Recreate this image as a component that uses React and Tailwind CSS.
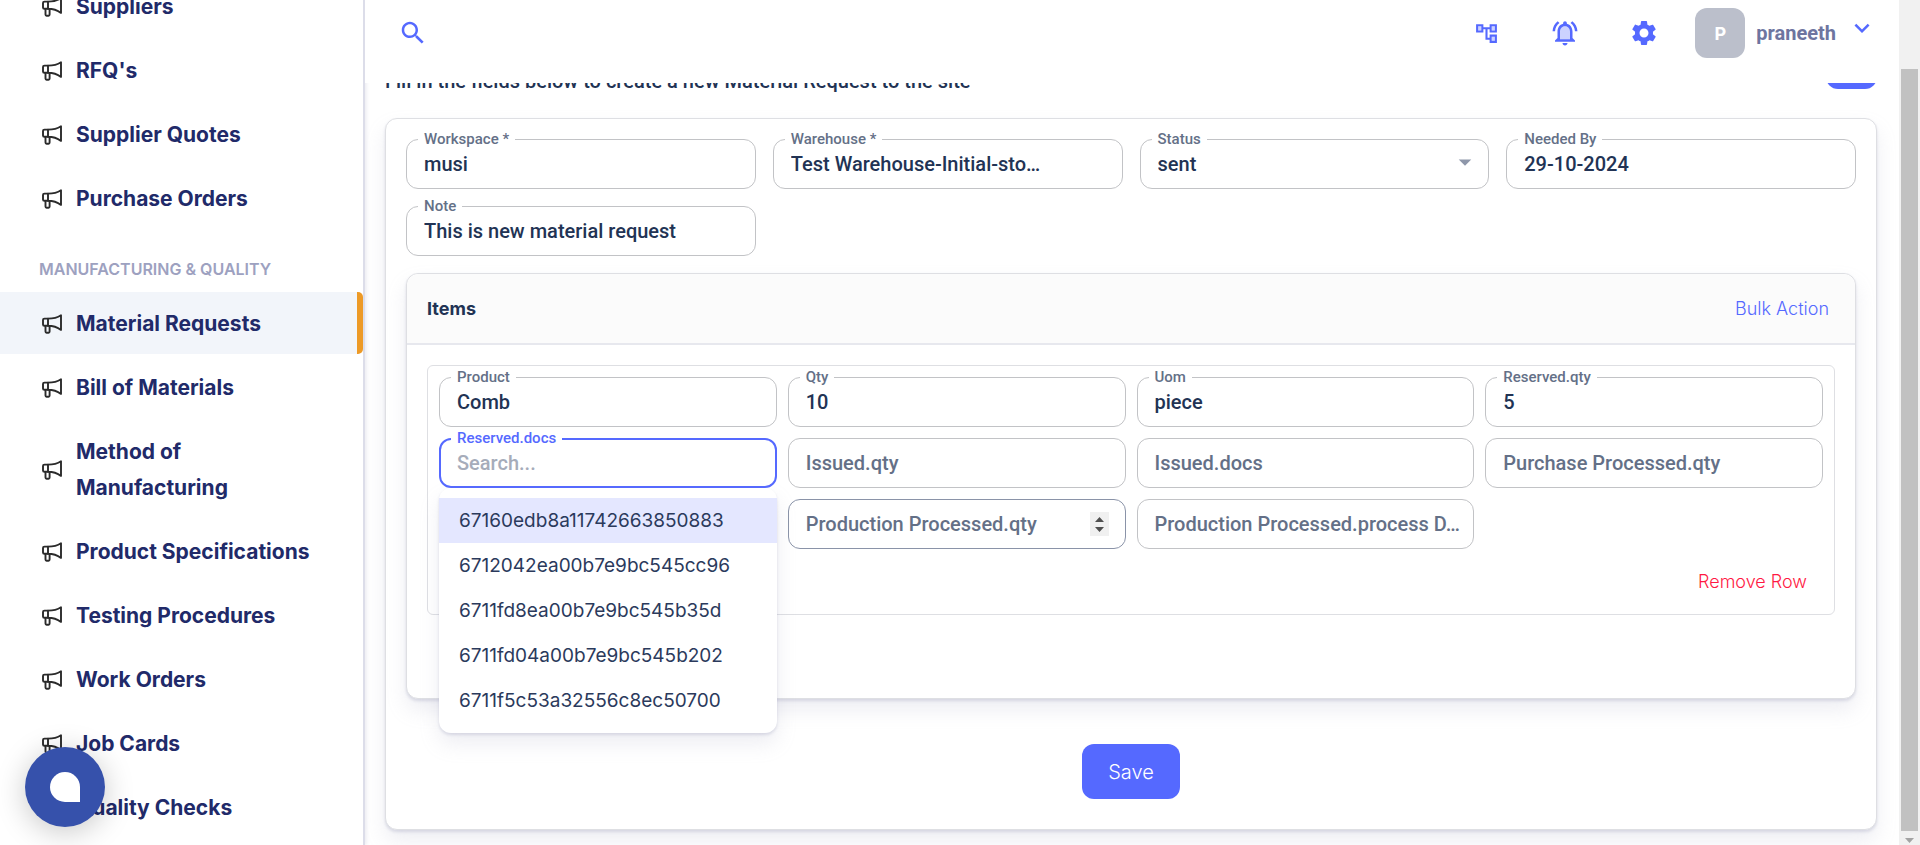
import { useId } from "react";

const purchasing = ["Suppliers", "RFQ's", "Supplier Quotes", "Purchase Orders"];
const manufacturing = [
  "Material Requests",
  "Bill of Materials",
  "Method of Manufacturing",
  "Product Specifications",
  "Testing Procedures",
  "Work Orders",
  "Job Cards",
  "Quality Checks",
];
const documents = [
  "67160edb8a11742663850883",
  "6712042ea00b7e9bc545cc96",
  "6711fd8ea00b7e9bc545b35d",
  "6711fd04a00b7e9bc545b202",
  "6711f5c53a32556c8ec50700",
];

function Megaphone() {
  return (
    <svg width="20" height="20" viewBox="0 0 20 20" fill="none" stroke="#2b2b2b" strokeWidth="1.9" strokeLinejoin="round" strokeLinecap="round" className="shrink-0">
      <path d="M6 4.6H2.4C1.4 4.6 1 5.2 1 6v4.400c0 .9.400 1.400 1.400 1.400H6" />
      <path d="M6 4.6c5.500 0 8.800-.6 13-3.400v14.700C15.300 13.200 11.700 11.800 6 11.800z" />
      <path d="M3.500 12v5.600c0 .9.300 1.200 1 1.200h2.100c.7 0 1-.3 1-1.200V12.100" />
    </svg>
  );
}

function NavItem({ label, active }) {
  return (
    <li>
      <a
        href="#"
        aria-current={active ? "page" : undefined}
        className={`flex items-center gap-[14px] pt-[14px] pr-8 pb-3 pl-[42px] text-[21px] leading-9 font-bold text-[#212a69] ${active ? "rounded-r-[5px] border-r-[6px] border-[#ed9a26] bg-[#f2f5fa]" : ""}`}
      >
        <Megaphone />
        <span>{label}</span>
      </a>
    </li>
  );
}

function Sidebar() {
  return (
    <nav className="relative z-10 w-[365px] shrink-0 overflow-hidden border-r-2 border-[#dcdde9] bg-white shadow-[2px_0_3px_rgba(159,162,191,0.18)]">
      <ul className="-mt-[25px] flex flex-col gap-[2px]">
        {purchasing.map((label) => (
          <NavItem key={label} label={label} />
        ))}
      </ul>
      <h2 className="pt-[29px] pb-[11px] pl-[39px] text-base leading-[23px] font-semibold text-[#9da1c0]">MANUFACTURING &amp; QUALITY</h2>
      <ul className="flex flex-col gap-[2px]">
        {manufacturing.map((label, i) => (
          <NavItem key={label} label={label} active={i === 0} />
        ))}
      </ul>
    </nav>
  );
}

function IconButton({ label, children }) {
  return (
    <button type="button" aria-label={label} className="flex h-[50px] w-[50px] items-center justify-center text-[#5569ff]">
      {children}
    </button>
  );
}

function Header() {
  return (
    <header className="relative z-10 flex h-[83px] shrink-0 items-start justify-between bg-white pt-2 pr-[22px] pl-[23px]">
      <IconButton label="Search">
        <svg width="30" height="30" viewBox="0 0 24 24" fill="currentColor">
          <path d="M15.5 14h-.79l-.28-.27C15.41 12.59 16 11.11 16 9.500 16 5.910 13.090 3 9.500 3S3 5.910 3 9.500 5.910 16 9.500 16c1.610 0 3.090-.59 4.230-1.570l.27.28v.79l5 4.990L20.490 19l-4.990-5zm-6 0C7.010 14 5 11.990 5 9.500S7.010 5 9.500 5 14 7.010 14 9.500 11.990 14 9.500 14z" />
        </svg>
      </IconButton>
      <div className="flex">
        <div className="mr-[26px] flex gap-[29px]">
          <IconButton label="Structure">
            <svg width="25" height="25" viewBox="0 0 24 24" fill="currentColor">
              <path opacity=".3" d="M7 5v4H4V5h3zm13 0v4h-3V5h3zm0 10v4h-3v-4h3z" />
              <path d="M22 11V3h-7v3H9V3H2v8h7V8h2v10h4v3h7v-8h-7v3h-2V8h2v3h7zM7 9H4V5h3v4zm10 6h3v4h-3v-4zm0-10h3v4h-3V5z" />
            </svg>
          </IconButton>
          <IconButton label="Notifications">
            <svg width="30" height="30" viewBox="0 0 24 24" fill="currentColor">
              <path opacity=".3" d="M12 6.500c-2.490 0-4 2.020-4 4.500v6h8v-6c0-2.480-1.510-4.500-4-4.500z" />
              <path d="M12 22c1.100 0 2-.9 2-2h-4c0 1.100.9 2 2 2zm6-6v-5c0-3.070-1.630-5.640-4.500-6.320V4c0-.83-.67-1.500-1.500-1.500s-1.500.67-1.500 1.500v.68C7.640 5.360 6 7.920 6 11v5l-2 2v1h16v-1l-2-2zm-2 1H8v-6c0-2.480 1.510-4.500 4-4.500s4 2.020 4 4.500v6zM7.580 4.080 6.150 2.650C3.750 4.480 2.170 7.300 2.030 10.500h2c.15-2.650 1.510-4.970 3.550-6.420zm12.390 6.420h2c-.15-3.200-1.730-6.020-4.120-7.850l-1.420 1.430c2.020 1.450 3.390 3.770 3.540 6.420z" />
            </svg>
          </IconButton>
          <IconButton label="Settings">
            <svg width="30" height="30" viewBox="0 0 24 24" fill="currentColor">
              <path d="M19.140 12.940c.04-.3.060-.61.060-.94 0-.32-.02-.64-.07-.94l2.030-1.580c.18-.14.23-.41.120-.61l-1.920-3.320c-.12-.22-.37-.29-.59-.22l-2.390.96c-.5-.38-1.030-.7-1.620-.94l-.36-2.540c-.04-.24-.24-.41-.48-.41h-3.840c-.24 0-.43.17-.47.41l-.36 2.540c-.59.24-1.130.57-1.620.94l-2.390-.96c-.22-.08-.47 0-.59.22L2.740 8.870c-.12.21-.08.47.120.61l2.030 1.580c-.05.3-.09.63-.09.94s.02.64.07.94l-2.030 1.580c-.18.14-.23.41-.12.61l1.920 3.320c.12.22.37.29.59.22l2.390-.96c.5.38 1.030.7 1.620.94l.36 2.540c.05.24.24.41.48.41h3.840c.24 0 .44-.17.47-.41l.36-2.540c.59-.24 1.130-.56 1.620-.94l2.390.96c.22.08.47 0 .59-.22l1.920-3.320c.12-.22.07-.47-.12-.61l-2.010-1.580zM12 15.600c-1.980 0-3.600-1.620-3.600-3.600s1.620-3.600 3.600-3.600 3.600 1.620 3.600 3.600-1.620 3.600-3.600 3.600z" />
            </svg>
          </IconButton>
        </div>
        <button type="button" className="flex items-center gap-[11px]">
          <span className="flex h-[50px] w-[50px] items-center justify-center rounded-xl bg-[#bbbfcb] text-[18px] font-bold text-white">P</span>
          <span className="font-['Roboto',sans-serif] text-xl font-bold text-[#6e759f]">praneeth</span>
          <svg width="30" height="30" viewBox="0 0 24 24" fill="#5569ff" className="mb-[10px]">
            <path d="M16.590 8.590 12 13.170 7.410 8.590 6 10l6 6 6-6z" />
          </svg>
        </button>
      </div>
    </header>
  );
}

function Field({ label, value, placeholder, options, focused, hovered, stepper, className = "", children }) {
  const id = useId();
  const raised = value !== undefined || focused;
  const border = focused ? "border-2 border-[#5569ff] px-[16px]" : hovered ? "border border-[#8a93a8] px-[17px]" : "border border-[#c2c3c6] px-[17px]";
  const box = `h-[50px] w-full rounded-xl bg-white text-xl font-medium text-[#223354] outline-none placeholder:text-[#a6acba] ${border}`;
  return (
    <div className={`relative font-['Roboto',sans-serif] ${className}`}>
      {options ? (
        <>
          <select id={id} defaultValue={value} className={`appearance-none ${box}`}>
            {options.map((o) => (
              <option key={o}>{o}</option>
            ))}
          </select>
          <svg width="30" height="30" viewBox="0 0 24 24" fill="#8e97aa" className="pointer-events-none absolute top-2 right-[9px]">
            <path d="m7 10 5 5 5-5z" />
          </svg>
        </>
      ) : (
        <input id={id} type="text" defaultValue={value} placeholder={placeholder} className={box} />
      )}
      {raised ? (
        <label htmlFor={id} className={`absolute -top-[9px] left-3 bg-white px-[6px] text-[15px] leading-[18px] font-medium ${focused ? "text-[#5569ff]" : "text-[#647087]"}`}>
          {label}
        </label>
      ) : (
        <label htmlFor={id} className="absolute inset-y-0 left-[18px] flex items-center text-xl font-medium whitespace-nowrap text-[#647087]">
          {label}
        </label>
      )}
      {stepper && (
        <span className="absolute top-[13px] right-[17px] h-6 w-[19px] bg-[#f0f0f0]">
          <svg width="19" height="24" viewBox="0 0 19 24" fill="#505050">
            <path d="M9.500 5 14 10H5zM9.500 20 5 15h9z" />
          </svg>
        </span>
      )}
      {children}
    </div>
  );
}

function DocumentMenu() {
  return (
    <ul role="listbox" className="absolute inset-x-0 top-full z-10 rounded-xl bg-white py-[10px] font-['Inter',sans-serif] text-[19px] leading-[45px] text-[#2b3a5c] shadow-[0_11px_20px_rgba(159,162,191,0.18),0_2px_3px_rgba(159,162,191,0.32)]">
      {documents.map((id, i) => (
        <li key={id} role="option" aria-selected={i === 0} className={`px-5 ${i === 0 ? "bg-[#e4e7ff]" : ""}`}>
          {id}
        </li>
      ))}
    </ul>
  );
}

function ItemsCard() {
  return (
    <section className="mt-[17px] rounded-xl border border-[#dedfe3] bg-white shadow-[0_11px_20px_rgba(159,162,191,0.18),0_2px_3px_rgba(159,162,191,0.32)]">
      <div className="flex h-[71px] items-center justify-between rounded-t-xl border-b-2 border-[#e7e8ee] bg-[#fbfbfb] px-5">
        <h3 className="text-[18px] font-bold text-[#223354]">Items</h3>
        <button type="button" className="px-[6px] text-[18px] font-light text-[#5569ff]">Bulk Action</button>
      </div>
      <div className="px-5 pt-5 pb-[83px]">
        <div className="rounded-md border border-[#dedfe3] p-[11px]">
          <div className="grid grid-cols-4 gap-[11px]">
            <Field label="Product" value="Comb" />
            <Field label="Qty" value="10" />
            <Field label="Uom" value="piece" />
            <Field label="Reserved.qty" value="5" />
            <Field label="Reserved.docs" placeholder="Search..." focused>
              <DocumentMenu />
            </Field>
            <Field label="Issued.qty" />
            <Field label="Issued.docs" />
            <Field label="Purchase Processed.qty" />
            <Field label="Production Processed.qty" hovered stepper className="col-start-2" />
            <Field label="Production Processed.process D…" />
          </div>
          <div className="mt-[10px] flex justify-end">
            <button type="button" className="h-11 px-4 text-[18px] font-light text-[#ff1943]">Remove Row</button>
          </div>
        </div>
      </div>
    </section>
  );
}

function Content() {
  return (
    <main className="min-h-0 flex-1 overflow-hidden pr-[22px] pl-5">
      <div className="-mt-[45px] flex h-[51px] items-start justify-between">
        <p className="pt-[31px] font-['Roboto',sans-serif] text-xl leading-6 font-medium text-[#223354]">Fill in the fields below to create a new Material Request to the site</p>
        <button type="button" aria-label="Back" className="h-[51px] w-[51px] rounded-xl bg-[#5569ff]" />
      </div>
      <form className="mt-[29px] rounded-xl border border-[#dedfe3] bg-white px-5 pt-5 pb-[30px] shadow-[0_11px_20px_rgba(159,162,191,0.18),0_2px_3px_rgba(159,162,191,0.32)]">
        <div className="grid grid-cols-4 gap-[17px]">
          <Field label="Workspace *" value="musi" />
          <Field label="Warehouse *" value="Test Warehouse-Initial-sto…" />
          <Field label="Status" value="sent" options={["sent"]} />
          <Field label="Needed By" value="29-10-2024" />
          <Field label="Note" value="This is new material request" />
        </div>
        <ItemsCard />
        <div className="mt-[45px] flex justify-center">
          <button type="button" className="h-[55px] rounded-xl bg-[#5569ff] px-[26px] text-[20px] font-light text-white">Save</button>
        </div>
      </form>
    </main>
  );
}

function ScrollTrack() {
  return (
    <div aria-hidden="true" className="flex w-[21px] shrink-0 flex-col items-center bg-[#f1f1f1] pt-[69px]">
      <div className="w-[17px] flex-1 bg-[#c1c1c1]" />
      <svg width="21" height="14" viewBox="0 0 21 14" fill="#a3a3a3">
        <path d="M6 7h9l-4.500 5z" />
      </svg>
    </div>
  );
}

export default function App() {
  return (
    <div className="flex h-screen overflow-hidden bg-white font-['Inter',sans-serif]">
      <Sidebar />
      <div className="flex min-w-0 flex-1 flex-col">
        <Header />
        <Content />
      </div>
      <ScrollTrack />
      <button type="button" aria-label="Open chat" className="fixed bottom-[18px] left-[25px] z-20 flex h-20 w-20 items-center justify-center rounded-full bg-[#3651ab] shadow-[0_5px_30px_rgba(0,0,0,0.22)]">
        <span className="h-[30px] w-[30px] rounded-full rounded-br-none bg-white" />
      </button>
    </div>
  );
}
